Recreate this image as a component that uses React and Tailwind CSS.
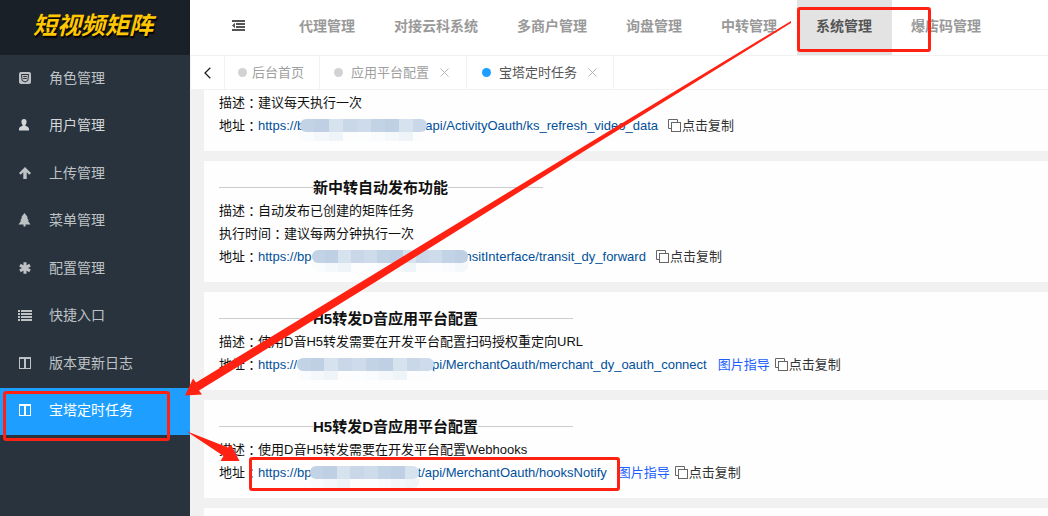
import { useState } from "react";

const sideItems = [
  { label: "角色管理", icon: "badge" },
  { label: "用户管理", icon: "user", bright: true },
  { label: "上传管理", icon: "up" },
  { label: "菜单管理", icon: "tree" },
  { label: "配置管理", icon: "asterisk" },
  { label: "快捷入口", icon: "list" },
  { label: "版本更新日志", icon: "columns" },
  { label: "宝塔定时任务", icon: "columns" },
];

const navItems = [
  "代理管理",
  "对接云科系统",
  "多商户管理",
  "询盘管理",
  "中转管理",
  "系统管理",
  "爆店码管理",
];

const shades = ["bg-[#c9d7e8]", "bg-[#c3d3e6]", "bg-[#d6e2ee]", "bg-[#cddbea]", "bg-[#bfd0e4]"];
const paleShades = ["bg-[#fafbfd]", "bg-[#fdfdfe]", "bg-[#f4f8fb]", "bg-[#fcfdfe]", "bg-[#eff4f9]"];

function SideIcon({ name }) {
  return (
    <svg viewBox="0 0 14 14" className="h-[14px] w-[14px] shrink-0" fill="currentColor" aria-hidden="true">
      {name === "badge" && (
        <>
          <rect x="1" y="1" width="12" height="12" rx="2" />
          <path
            d="M3.500 3.500h7l-.6 6L7 11 4.100 9.500zM5.200 5.500h3.600M5.200 7.500h3.600"
            fill="none"
            stroke="#28333e"
          />
        </>
      )}
      {name === "user" && (
        <path d="M6 1C4.300 1 3.300 2.300 3.400 4c.1 1.400.6 2.300 1.200 2.900v.8C3.300 8.300 1 9 1 10.800v1.700h10v-1.700C11 9 8.700 8.300 7.400 7.700v-.8C8 6.300 8.500 5.400 8.600 4 8.700 2.300 7.700 1 6 1z" />
      )}
      {name === "up" && <path d="M7 1l6 6-1.700 1.700-2.600-2.500V13H5.300V6.200L2.700 8.700 1 7z" />}
      {name === "tree" && (
        <path d="M6.500 0L3 4.400h1.300L2 7.600h1.300L.5 11.400h5V13.500h2v-2.100h5L9.700 7.600H11L8.700 4.400H10z" />
      )}
      {name === "asterisk" && (
        <path
          d="M7 1.200v11.600M2 4.100l10 5.800M12 4.100L2 9.900"
          fill="none"
          stroke="currentColor"
          strokeWidth="3"
        />
      )}
      {name === "list" && (
        <path d="M0 2h2v2H0zM3 2h11v2H3zM0 5h2v2H0zM3 5h11v2H3zM0 8h2v2H0zM3 8h11v2H3zM0 11h2v2H0zM3 11h11v2H3z" />
      )}
      {name === "columns" && (
        <path fillRule="evenodd" d="M1 1h12v12H1zM2 3v9h4V3zM8 3v9h4V3z" />
      )}
    </svg>
  );
}

function Sidebar({ active, onSelect }) {
  return (
    <aside className="w-[190px] shrink-0 bg-[#28333e]">
      <h1 className="flex h-[55px] items-center justify-center bg-[#1a2027] pb-1 pr-1 text-2xl font-bold italic text-[#ffc800] [text-shadow:1px_2px_1px_#000]">
        短视频矩阵
      </h1>
      <nav className="grid h-[380px] grid-rows-8">
        {sideItems.map((item) => (
          <button
            key={item.label}
            type="button"
            onClick={() => onSelect(item.label)}
            className={`flex items-center gap-[17px] pb-[2px] pl-[18px] text-left text-sm ${
              active === item.label
                ? "bg-[#1e9fff] text-white"
                : item.bright
                  ? "text-[#d4d6d8]"
                  : "text-[#bfc2c5]"
            }`}
          >
            <SideIcon name={item.icon} />
            <span>{item.label}</span>
          </button>
        ))}
      </nav>
    </aside>
  );
}

function TopNav({ active, onSelect }) {
  return (
    <header className="flex h-14 shrink-0 border-b border-[#f2f2f2] bg-white">
      <button type="button" aria-label="收起菜单" className="w-[90px] pb-1 pl-[41px] text-[#555]">
        <svg viewBox="0 0 14 11" className="h-[11px] w-[14px]" fill="currentColor">
          <path d="M1 0h13v2H1zM5 3h9v2H5zM5 6h9v2H5zM1 9h13v2H1zM4 2.700v5.600L1 5.500z" />
        </svg>
      </button>
      {navItems.map((label) => (
        <button
          key={label}
          type="button"
          onClick={() => onSelect(label)}
          className={`h-[55px] shrink-0 pb-[3px] pl-[19px] pr-5 text-sm font-bold ${
            active === label ? "bg-[#e3e3e3] text-[#555]" : "text-[#999]"
          }`}
        >
          {label}
        </button>
      ))}
    </header>
  );
}

function CloseButton({ label }) {
  return (
    <button type="button" aria-label={`关闭${label}`} className="ml-[11px] text-[#b4b4b4]">
      <svg viewBox="0 0 9 9" className="h-[9px] w-[9px]" fill="none" stroke="currentColor">
        <path d="M.5.5l8 8M8.500.5l-8 8" />
      </svg>
    </button>
  );
}

function PageTabs() {
  return (
    <div className="flex h-[34px] shrink-0 border-b border-[#f2f2f2] bg-white text-[13px] text-[#a0a0a0]">
      <button
        type="button"
        aria-label="向左"
        className="flex w-[35px] items-center justify-center border-x border-[#f2f2f2] text-[#222]"
      >
        <svg viewBox="0 0 7 12" className="h-3 w-[7px]" fill="none" stroke="currentColor" strokeWidth="1.300">
          <path d="M6.300.7L1 6l5.300 5.300" />
        </svg>
      </button>
      <div className="flex w-[95px] items-center border-r border-[#f2f2f2] pl-[13px]">
        <span className="mr-[5px] h-[9px] w-[9px] rounded-full bg-[#d2d2d2]" />
        <button type="button">后台首页</button>
      </div>
      <div className="flex w-[147px] items-center border-r border-[#f2f2f2] pl-[14px]">
        <span className="mr-2 h-[9px] w-[9px] rounded-full bg-[#d2d2d2]" />
        <button type="button">应用平台配置</button>
        <CloseButton label="应用平台配置" />
      </div>
      <div className="flex w-[147px] items-center border-r border-[#f2f2f2] pl-[15px]">
        <span className="mr-2 h-[9px] w-[9px] rounded-full bg-[#1e9fff]" />
        <button type="button" className="text-[#555]">
          宝塔定时任务
        </button>
        <CloseButton label="宝塔定时任务" />
      </div>
    </div>
  );
}

function Label({ children }) {
  return (
    <span className="flex">
      {children}
      <span className="font-['Noto_Sans_CJK_TC']">：</span>
    </span>
  );
}

function Line({ label, children }) {
  return (
    <p className="flex h-[23px] items-center">
      <Label>{label}</Label>
      {children}
    </p>
  );
}

// pixelated patch over the private part of an address
function Mosaic({ className, blocks }) {
  const cells = Array.from({ length: blocks });
  return (
    <span className={`relative flex h-[13px] shrink-0 ${className}`}>
      <span className="flex flex-1 overflow-hidden rounded-md">
        {cells.map((_, i) => (
          <span key={i} className={`flex-1 ${shades[(i * 3 + 1) % 5]}`} />
        ))}
      </span>
      <span className="absolute inset-x-0 top-full flex h-[9px] overflow-hidden rounded-b-md">
        {cells.map((_, i) => (
          <span key={i} className={`flex-1 ${paleShades[(i * 2) % 5]}`} />
        ))}
      </span>
    </span>
  );
}

function Address({ before, mask, blocks, after, guide }) {
  return (
    <div className="flex h-[23px] items-center">
      <Label>地址</Label>
      <a href="#address" className="flex items-center text-[#01509b]">
        {before}
        <Mosaic className={mask} blocks={blocks} />
        {after}
      </a>
      {guide && (
        <a href="#guide" className="ml-[11px] mr-[-5px] text-[#1c5fff]">
          图片指导
        </a>
      )}
      <button type="button" className="ml-[10px] flex items-center text-[#333]">
        <svg viewBox="0 0 14 14" className="h-[14px] w-[14px]" fill="none" stroke="#666">
          <path d="M3 9.500H.5v-9h9V3" />
          <rect x="3.500" y="3.500" width="9" height="9" />
        </svg>
        点击复制
      </button>
    </div>
  );
}

function Card({ title, children }) {
  return (
    <section className="bg-[#fefefe] px-[15px] py-[14px]">
      <div className="flex h-6 items-center">
        <span className="h-px w-[94px] bg-[#ccc]" />
        <h2 className="text-[15px] font-bold">{title}</h2>
        <span className="h-px w-[95px] bg-[#ccc]" />
      </div>
      {children}
    </section>
  );
}

function Annotations() {
  return (
    <svg
      className="pointer-events-none absolute left-0 top-0 h-[516px] w-[1048px]"
      viewBox="0 0 1048 516"
      fill="#ff2213"
      aria-hidden="true"
    >
      <g fill="none" stroke="#ff2213" strokeWidth="3">
        <rect x="798.500" y="8.500" width="131" height="42" rx="1.500" />
        <rect x="4.500" y="392.500" width="164" height="47" rx="1.500" />
        <rect x="250.500" y="458.500" width="368" height="31" rx="1.500" />
      </g>
      <path d="M791 21L581 148 366 279 196 382.500l-3-4-8 17 17-1-3-4L377 281 586 150 791 23z" />
      <path d="M186 431l42 16.500 3-3 8.500 16.500-19 0 3-5z" />
    </svg>
  );
}

export default function App() {
  const [side, setSide] = useState("宝塔定时任务");
  const [nav, setNav] = useState("系统管理");

  return (
    <div className="relative flex h-screen overflow-hidden font-['Liberation_Sans','Noto_Sans_CJK_SC',sans-serif]">
      <Sidebar active={side} onSelect={setSide} />
      <div className="flex min-w-0 flex-1 flex-col">
        <TopNav active={nav} onSelect={setNav} />
        <PageTabs />
        <main className="flex min-h-0 flex-1 flex-col gap-[10px] overflow-hidden whitespace-nowrap bg-[#f1f1f1] pl-[14px] text-[13px] leading-[23px] text-[#111]">
          <section className="bg-[#fefefe] px-[15px] pb-[14px] pt-px">
            <Line label="描述">建议每天执行一次</Line>
            <Address
              before="https://b"
              mask="-ml-1 -mr-[2px] w-[127px]"
              blocks={9}
              after="api/ActivityOauth/ks_refresh_video_data"
            />
          </section>
          <Card title="新中转自动发布功能">
            <Line label="描述">自动发布已创建的矩阵任务</Line>
            <Line label="执行时间">建议每两分钟执行一次</Line>
            <Address
              before="https://bp"
              mask="-mr-[3px] w-[156px]"
              blocks={12}
              after="nsitInterface/transit_dy_forward"
            />
          </Card>
          <Card title="H5转发D音应用平台配置">
            <Line label="描述">使用D音H5转发需要在开发平台配置扫码授权重定向URL</Line>
            <Address
              before="https://"
              mask="-mr-[2px] w-[137px]"
              blocks={10}
              after="pi/MerchantOauth/merchant_dy_oauth_connect"
              guide
            />
          </Card>
          <Card title="H5转发D音应用平台配置">
            <Line label="描述">使用D音H5转发需要在开发平台配置Webhooks</Line>
            <Address
              before="https://bp"
              mask="-ml-[2px] -mr-px w-[109px]"
              blocks={8}
              after="t/api/MerchantOauth/hooksNotify"
              guide
            />
          </Card>
          <section className="min-h-4 flex-1 bg-[#fefefe]" />
        </main>
      </div>
      <Annotations />
    </div>
  );
}
